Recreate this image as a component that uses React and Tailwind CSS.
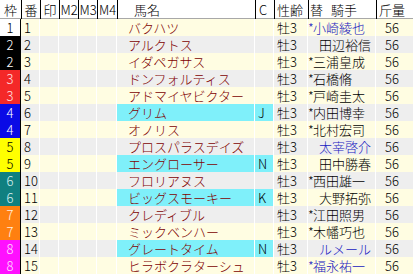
const waku = {
  1: "bg-white text-black",
  2: "bg-black text-white",
  3: "bg-[#f42828] text-[#ffe0e0]",
  4: "bg-[#0a0ae6] text-white",
  5: "bg-[#ffff00] text-black",
  6: "bg-[#108080] text-[#d8f0f0]",
  7: "bg-[#ff8010] text-[#fff0e0]",
  8: "bg-[#ff10ff] text-[#ffe0ff]",
};

const horses = [
  { w: 1, no: 1, name: "バクハツ", mark: "*", jockey: "小崎綾也", blue: true },
  { w: 2, no: 2, name: "アルクトス", mark: "", jockey: "田辺裕信" },
  { w: 2, no: 3, name: "イダペガサス", mark: "*", jockey: "三浦皇成" },
  { w: 3, no: 4, name: "ドンフォルティス", mark: "*", jockey: "石橋脩" },
  { w: 3, no: 5, name: "アドマイヤビクター", mark: "*", jockey: "戸崎圭太" },
  { w: 4, no: 6, name: "グリム", c: "J", mark: "*", jockey: "内田博幸" },
  { w: 4, no: 7, name: "オノリス", mark: "*", jockey: "北村宏司" },
  { w: 5, no: 8, name: "プロスパラスデイズ", mark: "", jockey: "太宰啓介", blue: true },
  { w: 5, no: 9, name: "エングローサー", c: "N", mark: "", jockey: "田中勝春" },
  { w: 6, no: 10, name: "フロリアヌス", mark: "*", jockey: "西田雄一" },
  { w: 6, no: 11, name: "ビッグスモーキー", c: "K", mark: "", jockey: "大野拓弥" },
  { w: 7, no: 12, name: "クレディブル", mark: "*", jockey: "江田照男" },
  { w: 7, no: 13, name: "ミックベンハー", mark: "*", jockey: "木幡巧也" },
  { w: 8, no: 14, name: "グレートタイム", c: "N", mark: "", jockey: "ルメール", blue: true },
  { w: 8, no: 15, name: "ヒラボクラターシュ", mark: "*", jockey: "福永祐一", blue: true },
];

const cols = "grid grid-cols-[21px_19px_19px_19px_19px_20px_138px_19px_34px_68px_1fr]";

function Header() {
  const h = "flex items-center border-l border-black h-full";
  return (
    <div className={`${cols} h-[19px] bg-white border-b border-[#a8a8a8] text-black`}>
      <div className="flex items-center justify-center h-full">枠</div>
      <div className={`${h} justify-center`}>番</div>
      <div className={`${h} justify-center`}>印</div>
      <div className={`${h} justify-center`}>M2</div>
      <div className={`${h} justify-center`}>M3</div>
      <div className={`${h} justify-center`}>M4</div>
      <div className={`${h} pl-[16px]`}>馬名</div>
      <div className={`${h} pl-[3px]`}>C</div>
      <div className={`${h} pl-[2px]`}>性齢</div>
      <div className={`${h} pl-[1px]`}>
        <span>替</span>
        <span className="ml-[8px]">騎手</span>
      </div>
      <div className={`${h} pl-[2px]`}>斤量</div>
    </div>
  );
}

function Row({ h, i }) {
  const bg = i % 2 === 0 ? "bg-[#fffde2]" : "bg-[#eeeeee]";
  const cell = `h-full border-r border-white ${bg}`;
  const cyan = "bg-[#7ff0fa]";
  return (
    <div className={`${cols} h-[17px] leading-[17px]`}>
      <div className={`h-full text-center border-r border-black ${waku[h.w]}`}>{h.w}</div>
      <div className={`${cell} pl-[3px]`}>{h.no}</div>
      <div className={cell}></div>
      <div className={cell}></div>
      <div className={cell}></div>
      <div className={cell}></div>
      <div className={`h-full border-r border-white pl-[11px] text-[#800000] ${h.c ? cyan : bg}`}>{h.name}</div>
      <div className={`h-full border-r border-white pl-[3px] ${h.c ? cyan : bg}`}>{h.c}</div>
      <div className={`${cell} pl-[3px]`}>牡3</div>
      <div className={`${cell} flex ${h.blue ? "text-[#2020c0]" : "text-black"}`}>
        {h.mark ? <span className="w-[5px]">*</span> : <span className="w-[11px]"></span>}
        <span>{h.jockey}</span>
      </div>
      <div className={`h-full ${bg} pl-[9px]`}>56</div>
    </div>
  );
}

export default function App() {
  return (
    <div className="w-[413px] h-[275px] overflow-hidden bg-white text-[13px] font-light font-['Noto_Sans_CJK_JP',sans-serif]">
      <Header />
      {horses.map((h, i) => (
        <Row key={h.no} h={h} i={i} />
      ))}
    </div>
  );
}
